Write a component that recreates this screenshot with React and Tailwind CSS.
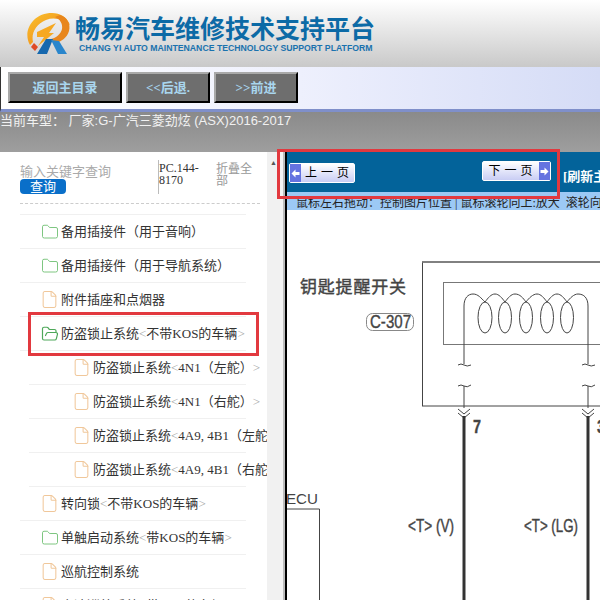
import { Folder, FolderOpen, File } from "lucide-react";

const rows = [
  { icon: "folder", level: 1, name: "备用插接件（用于音响）" },
  { icon: "folder", level: 1, name: "备用插接件（用于导航系统）" },
  { icon: "file", level: 1, name: "附件插座和点烟器" },
  { icon: "open", level: 1, name: "防盗锁止系统", tail: "<", rest: "不带KOS的车辆", end: ">" },
  { icon: "file", level: 2, name: "防盗锁止系统", tail: "<", rest: "4N1（左舵）", end: ">" },
  { icon: "file", level: 2, name: "防盗锁止系统", tail: "<", rest: "4N1（右舵）", end: ">" },
  { icon: "file", level: 2, name: "防盗锁止系统", tail: "<", rest: "4A9, 4B1（左舵）", end: ">" },
  { icon: "file", level: 2, name: "防盗锁止系统", tail: "<", rest: "4A9, 4B1（右舵）", end: ">" },
  { icon: "file", level: 1, name: "转向锁", tail: "<", rest: "不带KOS的车辆", end: ">" },
  { icon: "folder", level: 1, name: "单触启动系统", tail: "<", rest: "带KOS的车辆", end: ">" },
  { icon: "file", level: 1, name: "巡航控制系统" },
  { icon: "file", level: 1, name: "定速巡航系统", tail: "<", rest: "带KOS的车辆", end: ">" },
];

const RowIcon = ({ type }) => {
  if (type === "folder") return <Folder size={18} strokeWidth={1.2} className="text-[#6fbf73]" />;
  if (type === "open") return <FolderOpen size={18} strokeWidth={1.6} className="text-[#4ea85a]" />;
  return <File size={19} strokeWidth={1.3} className="text-[#f0c79a]" />;
};

const TreeRow = ({ row }) => (
  <div
    className={`flex h-[34px] shrink-0 items-center gap-[2px] whitespace-nowrap border-b border-[#f0f0f0] text-[13px] text-[#333] ${
      row.level === 2 ? "ml-[9px] pl-[43px]" : "pl-[20px]"
    }`}
  >
    <span className="flex w-[19px] shrink-0 justify-center">
      <RowIcon type={row.icon} />
    </span>
    <span>
      {row.name}
      <span className="text-[#aaa]">{row.tail}</span>
      {row.rest}
      <span className="text-[#aaa]">{row.end}</span>
    </span>
  </div>
);

const PageArrow = ({ dir }) => (
  <span className="flex h-full w-[11px] shrink-0 items-center justify-center bg-[#6573e0]">
    <svg viewBox="0 0 9 9" className="h-[9px] w-[9px]" fill="white">
      {dir === "left" ? <path d="M0.500 4.500L4.500 0.500V3H8.500V6H4.500V8.500Z" /> : <path d="M8.500 4.500L4.500 0.500V3H0.500V6H4.500V8.500Z" />}
    </svg>
  </span>
);

const PageButton = ({ label, arrow, className }) => (
  <div
    className={`flex h-[20px] shrink-0 items-center rounded-[2px] border border-white bg-gradient-to-b from-[#ffffff] to-[#c9cdf4] text-[12px] text-black ${className}`}
  >
    {arrow === "left" && <PageArrow dir="left" />}
    <span className="flex-1 pl-[3px] text-center tracking-[4px]">{label}</span>
    {arrow === "right" && <PageArrow dir="right" />}
  </div>
);

const NavButton = ({ label, width }) => (
  <div
    className={`flex h-[31px] items-center justify-center border-2 border-t-[#a9a9a9] border-l-[#a9a9a9] border-r-black border-b-black bg-[#6e6e6e] text-[13px] font-bold text-[#a9d6ee] ${width}`}
  >
    {label}
  </div>
);

const Logo = () => (
  <svg viewBox="25 12 46 42" className="h-[42px] w-[46px] shrink-0" fill="none">
    <defs>
      <linearGradient id="ring" x1="0" y1="0" x2="1" y2="1">
        <stop offset="0" stopColor="#f9c22e" />
        <stop offset="1" stopColor="#ee7d12" />
      </linearGradient>
    </defs>
    <path d="M30 45C22 31 33 13 52 13C60 13 67 17 70 25C63 19 54 17 46 20C36 24 31 33 33 42Z" fill="url(#ring)" />
    <path d="M60 15C67 17 71 24 69 31C67 38 61 42 55 43L51 39C56 38 61 34 62 29C63 24 60 19 55 17Z" fill="#e8861c" />
    <path d="M37 32L56 23L49 33L54 33L38 46L44 37L37 37Z" fill="#f6a821" />
    <path d="M34 43L38 47L35 51L31 47Z" fill="#df4a26" />
    <path d="M37 54L46 39L53 39L47 54Z" fill="#1668ae" />
    <path d="M51 40L59 41L67 54L58 54Z" fill="#2a86cc" />
  </svg>
);

const Diagram = () => (
  <svg viewBox="287 210 313 390" className="block h-[390px] w-[313px] shrink-0" fill="none" stroke="#444">
    <rect x="422.500" y="262" width="200" height="144" strokeWidth="1" />
    <path d="M422 262H600" stroke="#777" strokeWidth="1.500" />
    <rect x="443.500" y="282.500" width="180" height="62" strokeWidth="1" stroke="#777" />
    <path
      d="M464 345V306C464 298 468 294 473 294C478 294 481 298 485 302C488 298 491 294 495 294C499 294 502 298 505 302C508 298 511 294 515 294C520 294 523 298 526 302C529 298 533 294 537 294C541 294 544 298 547 302C550 298 553 294 557 294C561 294 564 298 567 302C570 298 574 294 578 294C584 294 588 298 588 306V345"
      strokeWidth="1"
    />
    {[485, 505, 526, 547, 567].map((x) => (
      <ellipse key={x} cx={x} cy="317.500" rx={x === 485 ? 7 : 6.500} ry="15.500" strokeWidth="1" />
    ))}
    {[464, 588].map((x) => (
      <g key={x} strokeWidth="1">
        <path d={`M${x} 345V364`} />
        <path d={`M${x - 6} 365Q${x - 3} 363 ${x} 365T${x + 7} 365`} />
        <path d={`M${x - 6} 386Q${x - 3} 384 ${x} 386T${x + 7} 385`} />
        <path d={`M${x} 386V408`} />
        <path d={`M${x - 6} 409L${x} 414L${x + 6} 409M${x - 6} 413L${x} 418L${x + 6} 413`} />
        <path d={`M${x} 416V600`} strokeWidth="3" stroke="#333" />
      </g>
    ))}
    <rect x="366.500" y="313.500" width="47" height="17" rx="6" strokeWidth="1" stroke="#888" />
    <path d="M287 509H319.500V600" strokeWidth="1" />
    <g fill="#444" stroke="#444" strokeWidth="0.400" fontFamily="'Liberation Sans','Noto Sans CJK SC',sans-serif">
      <text x="300" y="293" fontSize="17" letterSpacing="0.800" fontFamily="'Noto Sans CJK SC',sans-serif">钥匙提醒开关</text>
      <text x="370" y="328" fontSize="19" textLength="41" lengthAdjust="spacingAndGlyphs">C-307</text>
      <text x="473" y="433" fontSize="18" fontWeight="700" textLength="8" lengthAdjust="spacingAndGlyphs">7</text>
      <text x="597" y="433" fontSize="18" fontWeight="700" textLength="8" lengthAdjust="spacingAndGlyphs">3</text>
      <text x="286" y="504" fontSize="15" strokeWidth="0" textLength="32" lengthAdjust="spacingAndGlyphs">ECU</text>
      <text x="408" y="532" fontSize="18" textLength="46" lengthAdjust="spacingAndGlyphs">{"<T> (V)"}</text>
      <text x="524" y="532" fontSize="18" textLength="54" lengthAdjust="spacingAndGlyphs">{"<T> (LG)"}</text>
    </g>
  </svg>
);

const App = () => {
  return (
    <div className="relative flex h-[600px] w-[600px] flex-col overflow-hidden bg-white font-['Liberation_Serif','Noto_Sans_CJK_SC',serif]">
      {/* header */}
      <div className="flex h-[67px] shrink-0 gap-[4px] bg-gradient-to-b from-white to-[#c9c9c9] pl-[25px] pt-[12px]">
        <Logo />
        <div className="flex flex-col">
          <div className="whitespace-nowrap font-['Noto_Sans_CJK_SC',sans-serif] text-[25px] font-bold leading-[30px] text-[#0c6aa6]">畅易汽车维修技术支持平台</div>
          <div className="whitespace-nowrap pl-[4px] font-['Liberation_Sans',sans-serif] text-[8.7px] font-bold leading-[12px] text-[#1a72ae]">
            CHANG YI AUTO MAINTENANCE TECHNOLOGY SUPPORT PLATFORM
          </div>
        </div>
      </div>

      {/* nav buttons */}
      <div className="flex h-[45px] shrink-0 gap-[4px] border-b-[3px] border-l border-b-[#7f8fca] border-l-[#333] bg-gradient-to-r from-white via-[#eef0fd] to-[#d5dcf6] pl-[7px] pt-[5px]">
        <NavButton label="返回主目录" width="w-[114px]" />
        <NavButton label="<<后退." width="w-[84px]" />
        <NavButton label=">>前进" width="w-[84px]" />
      </div>

      {/* current model */}
      <div className="h-[40px] shrink-0 whitespace-nowrap bg-gradient-to-b from-[#8a8a8a] to-[#9e9e9e] font-['Liberation_Sans','Noto_Sans_CJK_SC',sans-serif] text-[13px] leading-[18px] text-[#f1f1f1]">
        当前车型：&nbsp;厂家:G-广汽三菱劲炫 (ASX)2016-2017
      </div>

      <div className="flex min-h-0 flex-1">
        {/* sidebar */}
        <div className="flex w-[267px] shrink-0 flex-col overflow-hidden pl-[20px]">
          <div className="flex h-[52px] w-[240px] shrink-0 border-b border-dashed border-[#ccc] pt-[8px]">
            <div className="w-[138px] pt-[4px]">
              <div className="text-[13px] leading-[15px] text-[#aaa]">输入关键字查询</div>
              <div className="flex h-[15px] w-[46px] items-center justify-center rounded-[4px] bg-[#0a6fc9] text-[13px] text-white">查询</div>
            </div>
            <div className="h-[34px] w-[58px] border-l border-[#bbb] pt-[2px] text-[12px] leading-[12px] text-[#333]">PC.144-8170</div>
            <div className="w-[38px] pt-[3px] text-[12px] leading-[12px] text-[#999]">折叠全部</div>
          </div>
          <div className="mt-[10px] w-[226px] border-b border-[#f0f0f0]" />
          <div className="flex flex-col">
            {rows.map((row, i) => (
              <div key={i} className="w-[226px]">
                <TreeRow row={row} />
              </div>
            ))}
          </div>
        </div>

        {/* scrollbar */}
        <div className="flex w-[13px] shrink-0 justify-center bg-[#f1f1f1] pt-[7px] text-[7px] leading-[8px] text-[#555]">▲</div>
        <div className="w-[3px] shrink-0 bg-[#f4f4f4]" />
        <div className="w-[2px] shrink-0 bg-[#bdbdbd]" />
        <div className="w-[2px] shrink-0 bg-black" />

        {/* viewer */}
        <div className="flex min-w-0 flex-1 flex-col overflow-hidden">
          <div className="flex h-[40px] shrink-0 whitespace-nowrap bg-[#03639a] pl-[2px]">
            <PageButton label="上一页" arrow="left" className="mt-[11px] w-[66px]" />
            <PageButton label="下一页" arrow="right" className="ml-[127px] mt-[9px] w-[69px]" />
            <div className="ml-[12px] shrink-0 pt-[16px] text-[13px] font-bold leading-[18px] text-white">[刷新主</div>
          </div>
          <div className="h-[18px] shrink-0 overflow-hidden whitespace-nowrap bg-[#9cc9f5] pl-[9px] text-[12px] leading-[22px] text-[#222]">
            鼠标左右拖动：控制图片位置 | 鼠标滚轮向上:放大&nbsp;&nbsp;滚轮向下:缩小
          </div>
          <Diagram />
        </div>
      </div>

      {/* red annotations */}
      <div className="absolute left-[277px] top-[149px] h-[50px] w-[283px] border-[3px] border-[#e2393f]" />
      <div className="absolute left-[28px] top-[312px] h-[44px] w-[231px] border-[3px] border-[#e2393f]" />
    </div>
  );
};

export default App;
